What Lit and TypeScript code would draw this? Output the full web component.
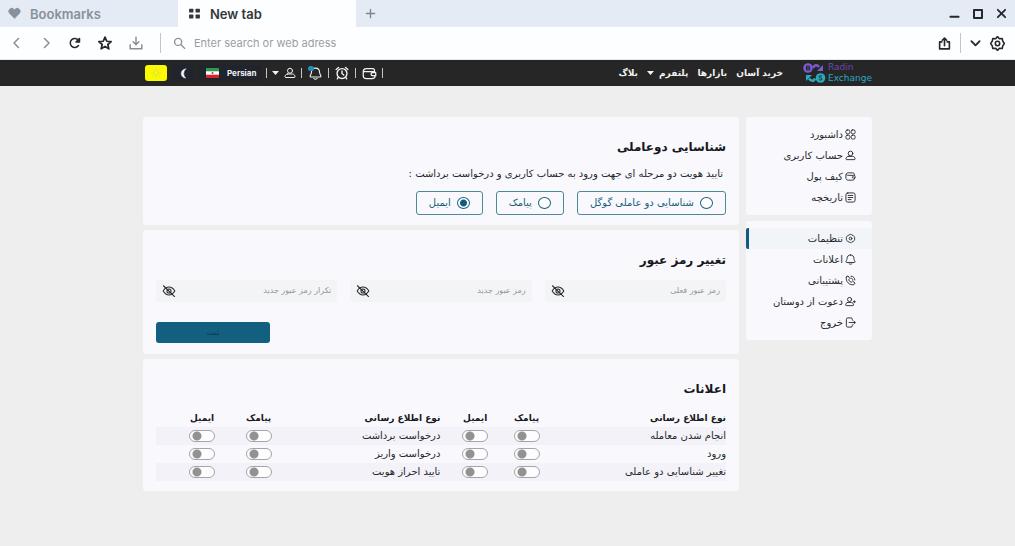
import { LitElement, html, css, svg, nothing } from "lit";
import { customElement, state } from "lit/decorators.js";
import { classMap } from "lit/directives/class-map.js";

const icon = (body: unknown, size = 12, stroke = 1.8, cls = "") => html`
  <svg class=${cls} width=${size} height=${size} viewBox="0 0 24 24" fill="none" stroke="currentColor"
    stroke-width=${stroke} stroke-linecap="round" stroke-linejoin="round" aria-hidden="true">${body}</svg>`;

const glyph = {
  heart: svg`<path fill="currentColor" d="M12 21 3 12a5.6 5.6 0 0 1 0-8 5.6 5.6 0 0 1 8 0l1 1 1-1a5.6 5.6 0 0 1 8 8z"/>`,
  tiles: svg`<g fill="currentColor" stroke="none"><rect x="2" y="3" width="8" height="7" rx="1"/><rect x="14" y="3" width="8" height="7" rx="1"/><rect x="2" y="14" width="8" height="7" rx="1"/><rect x="14" y="14" width="8" height="7" rx="1"/></g>`,
  plus: svg`<path d="M12 3v18M3 12h18"/>`,
  minimize: svg`<path d="M3 19h18"/>`,
  maximize: svg`<rect x="4" y="4" width="16" height="16"/>`,
  close: svg`<path d="m4 4 16 16M20 4 4 20"/>`,
  back: svg`<path d="m15 3-9 9 9 9"/>`,
  forward: svg`<path d="m9 3 9 9-9 9"/>`,
  reload: svg`<path d="M19 17a9 9 0 1 1 0-10"/><path fill="currentColor" d="M21 3v7h-7z"/>`,
  star: svg`<path d="m12 2 3 7 7.500.6-5.700 5 1.800 7.400L12 18l-6.600 4 1.800-7.400-5.700-5L9 9z"/>`,
  download: svg`<path d="M12 2v13m-5-5 5 5 5-5M2 15v7h20v-7"/>`,
  search: svg`<circle cx="9.500" cy="9" r="6.500"/><path d="m14.500 14 7 7"/>`,
  share: svg`<path d="M7 9H3v13h18V9h-4M12 16V3M8 6l4-4 4 4"/>`,
  down: svg`<path d="m3 7 9 9 9-9"/>`,
  cog: svg`<path d="m12 1 3 3.500 4.500-.5 1 4.500L23 12l-2.500 3.500-1 4.500-4.500-.5L12 23l-3-3.500-4.500.5-1-4.500L1 12l2.500-3.500 1-4.500 4.500.5z"/><circle cx="12" cy="12" r="3.500"/>`,
  bulb: svg`<circle cx="12" cy="12" r="5"/><path d="M12 2v2M12 20v2M2 12h2M20 12h2M5 5l1 1M18 18l1 1M5 19l1-1M18 6l1-1"/>`,
  moon: svg`<path fill="currentColor" d="M17 2a10 10 0 1 0 0 20 13 13 0 0 1 0-20z"/>`,
  user: svg`<circle cx="12" cy="7.500" r="5"/><path d="M7 14h10c3 0 5 3 5 5.500 0 1-.5 1.500-1.500 1.500h-17C2.500 21 2 20.500 2 19.500 2 17 4 14 7 14z"/>`,
  bell: svg`<path d="M12 2c-4.800 0-7.500 3.300-7.500 7.800 0 3.700-2.500 5.200-2.500 7.200 0 1 .7 1.500 1.500 1.500h17c.8 0 1.500-.5 1.500-1.500 0-2-2.500-3.500-2.500-7.200C19.500 5.300 16.800 2 12 2zM9 21.500c1.500 1 4.500 1 6 0"/>`,
  alarm: svg`<circle cx="12" cy="13" r="8.500"/><path d="M12 8.500V13l3 2.500M2 6l4-3.500M22 6l-4-3.500M5.500 19.500 4 22M18.500 19.500 20 22"/>`,
  wallet: svg`<path d="M20 9V7c0-2-1-3-3-3H7C4 4 2 6 2 9v6c0 3 2 5 5 5h9c3 0 5-2 5-4M2 9h16c2.500 0 4 1 4 3v3.500h-5a2.500 2.500 0 0 1 0-5h5"/>`,
  purse: svg`<path d="M21 15.500c0 3-2 4.500-5 4.500H7c-3 0-5-2-5-5V9c0-3 2-5 5-5h9c3 0 5 1.500 5 4.500M3 8c1 1.200 2 1.500 4 1.500h12c2 0 3 .8 3 2.500v3.500h-4a2 2 0 0 1 0-4"/>`,
  grid: svg`<rect x="2" y="2" width="8.500" height="8.500" rx="3"/><rect x="13.500" y="2" width="8.500" height="8.500" rx="3"/><rect x="2" y="13.500" width="8.500" height="8.500" rx="3"/><rect x="13.500" y="13.500" width="8.500" height="8.500" rx="3"/>`,
  history: svg`<rect x="2" y="2" width="20" height="20" rx="4"/><path d="M7 7.500h10M7 12h10M7 16.500h6"/>`,
  settings: svg`<path d="M10 3.500c1.300-.8 2.700-.8 4 0l5 3c1.300.8 2 1.800 2 3.300v4.400c0 1.500-.7 2.500-2 3.300l-5 3c-1.300.8-2.700.8-4 0l-5-3c-1.300-.8-2-1.800-2-3.300V9.800c0-1.500.7-2.500 2-3.300z"/><circle cx="12" cy="12" r="3"/>`,
  phone: svg`<path d="M3 4.500 6.500 2l4 5.500L8 10.500c1 2.500 3 4.500 5.500 5.500l3-2.500 5.500 4-2.500 3.500C10 23.500.5 14 3 4.500zM13 2.500c5 0 8.500 3.500 8.500 8.500M13 7c2.500 0 4 1.500 4 4"/>`,
  invite: svg`<circle cx="10" cy="7.500" r="4.500"/><path d="M6 14h8c3 0 4.500 3 4.500 5.500 0 1-.5 1.500-1.500 1.500H3c-1 0-1.500-.5-1.500-1.500C1.500 17 3 14 6 14zM20.500 10.500v4M18.500 12.500h4"/>`,
  exit: svg`<path d="M16 7V5c0-2-1-3-3-3H6C4 2 3 3 3 5v14c0 2 1 3 3 3h7c2 0 3-1 3-3v-2M9 12h13M19 8.500l3.500 3.500-3.500 3.500"/>`,
  eyeOff: svg`<path d="M2 12c5.500-9 14.500-9 20 0-5.500 9-14.500 9-20 0z"/><circle cx="12" cy="12" r="3.500"/><path d="M2.500 3 21.500 21.500"/>`,
};

const sideGroups = [
  [
    { label: "داشبورد", icon: glyph.grid },
    { label: "حساب کاربری", icon: glyph.user },
    { label: "کیف پول", icon: glyph.purse },
    { label: "تاریخچه", icon: glyph.history },
  ],
  [
    { label: "تنظیمات", icon: glyph.settings, active: true },
    { label: "اعلانات", icon: glyph.bell },
    { label: "پشتیبانی", icon: glyph.phone },
    { label: "دعوت از دوستان", icon: glyph.invite },
    { label: "خروج", icon: glyph.exit },
  ],
];

@customElement("browser-bar")
export class BrowserBar extends LitElement {
  static styles = css`
    :host { display: block; font-family: Inter, "Open Sans", sans-serif; color: #25282c; background: #fdfeff; border-bottom: 1px solid #e6e8ea; }
    * { box-sizing: border-box; }
    svg { display: block; flex: none; }
    button { border: 0; padding: 0; background: none; color: inherit; font: inherit; cursor: pointer; }
    .strip { display: flex; height: 27px; background: #e4ebf4; }
    .strip .tab { display: flex; align-items: center; gap: 9px; width: 178px; padding: 0 8px; font-size: 13px; font-weight: 600; line-height: 24px; color: #88919a; }
    .strip .current { background: #fdfeff; color: #33363a; padding: 0 10px; }
    .add { padding: 0 9px; color: #7d858e; }
    .window { display: flex; align-items: center; gap: 12px; margin-left: auto; padding-right: 8px; }
    .tools { display: flex; align-items: center; height: 32px; padding: 0 10px 0 11px; }
    .nav { display: flex; align-items: center; gap: 17px; }
    .soft { color: #8b8f93; }
    .bar { width: 1px; height: 20px; background: #c2c5c8; }
    .search { display: flex; flex: 1; align-items: center; gap: 8px; margin-left: 12px; color: #8b8f93; }
    .search input { flex: 1; min-width: 0; padding: 0; border: 0; outline: 0; background: none; font: 11px Inter, sans-serif; color: #333; }
    .search input::placeholder { color: #9b9ea2; opacity: 1; }
    .end { display: flex; align-items: center; gap: 9px; }
  `;

  render() {
    return html`
      <div class="strip">
        <button class="tab">${icon(glyph.heart, 13, 1)}<span>Bookmarks</span></button>
        <button class="tab current">${icon(glyph.tiles, 13, 1)}<span>New tab</span></button>
        <button class="add" aria-label="New tab">${icon(glyph.plus, 11, 3)}</button>
        <div class="window">
          <button aria-label="Minimize">${icon(glyph.minimize, 11, 4)}</button>
          <button aria-label="Maximize">${icon(glyph.maximize, 12, 4)}</button>
          <button aria-label="Close">${icon(glyph.close, 11, 4)}</button>
        </div>
      </div>
      <div class="tools">
        <div class="nav">
          <button class="soft" aria-label="Back">${icon(glyph.back, 12, 3)}</button>
          <button class="soft" aria-label="Forward">${icon(glyph.forward, 12, 3)}</button>
          <button aria-label="Reload">${icon(glyph.reload, 12, 3)}</button>
          <button aria-label="Favourite">${icon(glyph.star, 14, 3)}</button>
          <button class="soft" aria-label="Download">${icon(glyph.download, 14, 2.5)}</button>
          <span class="bar"></span>
        </div>
        <label class="search">${icon(glyph.search, 13, 2.5)}
          <input type="text" aria-label="Address" placeholder="Enter search or web adress" />
        </label>
        <div class="end">
          <button aria-label="Share">${icon(glyph.share, 13, 3)}</button>
          <span class="bar"></span>
          <button aria-label="More">${icon(glyph.down, 11, 4)}</button>
          <button aria-label="Settings">${icon(glyph.cog, 15, 2.5)}</button>
        </div>
      </div>`;
  }
}

@customElement("site-header")
export class SiteHeader extends LitElement {
  static styles = css`
    :host { display: block; background: #262626; color: #f2f2f2; }
    * { box-sizing: border-box; }
    svg { display: block; flex: none; }
    button { display: flex; align-items: center; justify-content: center; border: 0; padding: 0; background: none; color: inherit; font: inherit; cursor: pointer; }
    a { color: inherit; text-decoration: none; }
    .inner { display: flex; align-items: center; justify-content: space-between; width: calc(100% - 32px); max-width: 729px; height: 26px; margin: 0 auto; }
    .start { display: flex; align-items: center; gap: 20px; }
    .logo { display: flex; align-items: center; gap: 2px; direction: ltr; color: #29a9c4; font: 9px/11px "DejaVu Sans", sans-serif; }
    .word { display: flex; flex-direction: column; }
    .top { color: #6b46b4; }
    .links { display: flex; gap: 9px; font: bold 9px/16px "DejaVu Sans", sans-serif; }
    .links a { display: flex; align-items: center; gap: 5px; }
    .tools { display: flex; align-items: center; direction: ltr; gap: 5px; padding-left: 2px; }
    .tile { width: 22px; height: 16px; border-radius: 3px; background: #1f242d; }
    .tile.sun { background: #fbfb00; color: #dede50; }
    .lang { gap: 8px; height: 16px; padding: 0 5px 0 7px; border-radius: 3px; background: #1f242d; font: bold 8px/16px Inter, sans-serif; }
    .account { display: flex; align-items: center; gap: 5px; }
    .account i { width: 1px; height: 10px; background: #c4c4c4; }
    .account button { width: 14px; height: 16px; margin: 0 1px; }
    .account .user { width: auto; gap: 5px; margin: 0; }
    .bell { position: relative; }
    .badge { position: absolute; top: 1px; left: 0; width: 6px; height: 5px; border-radius: 3px; background: #2b8fb5; }
  `;

  render() {
    const caret = html`<svg width="7" height="4" viewBox="0 0 7 4" aria-hidden="true"><path fill="currentColor" d="M0 0h7L3.500 4z"/></svg>`;
    return html`
      <div class="inner">
        <div class="start">
          <a class="logo" href="#home">
            <svg width="23" height="20" viewBox="0 0 23 20" aria-hidden="true">
              <circle cx="5" cy="5" r="4.800" fill="#7a5bd0"/>
              <path d="M3.500 3h2.300a1 1 0 0 1 0 2H3.500h2.600a1 1 0 0 1 0 2H3.500z" fill="none" stroke="#262626"/>
              <path d="M10 5c1-3 4-4 6-1" fill="none" stroke="#7a5bd0" stroke-width="2.500"/><path d="M20 2v6h-6z" fill="#7a5bd0"/>
              <circle cx="17.500" cy="15" r="4.800" fill="#2aa9bf"/>
              <path d="M19 13.300c-1-.9-3-.6-3 .5 0 1.300 3 .9 3 2.200 0 1.200-2 1.400-3.200.5" fill="none" stroke="#262626"/>
              <path d="M12 15.500c-1 3-4 3-6 0" fill="none" stroke="#2aa9bf" stroke-width="2.500"/><path d="M3 18v-6h6z" fill="#2aa9bf"/>
            </svg>
            <span class="word"><span class="top">Radin</span><span>Exchange</span></span>
          </a>
          <nav class="links">
            <a href="#buy">خرید آسان</a>
            <a href="#markets">بازارها</a>
            <a href="#platform">پلتفرم ${caret}</a>
            <a href="#blog">بلاگ</a>
          </nav>
        </div>
        <div class="tools">
          <button class="tile sun" aria-label="Light">${icon(glyph.bulb, 12, 2)}</button>
          <button class="tile" aria-label="Dark">${icon(glyph.moon, 11, 1)}</button>
          <button class="lang">
            <svg width="13" height="10" viewBox="0 0 13 10" aria-hidden="true">
              <path fill="#fff" d="M0 0h13v10H0z"/><path fill="#2c9a50" d="M0 0h13v3.300H0z"/><path fill="#d8252c" d="M0 6.700h13V10H0z"/><circle cx="6.500" cy="5" r="1" fill="#d8252c"/>
            </svg>
            <span>Persian</span>
          </button>
          <div class="account">
            <i></i>
            <button class="user" aria-label="Account">${caret}${icon(glyph.user, 12, 2)}</button>
            <i></i>
            <button class="bell" aria-label="Notifications">${icon(glyph.bell, 13, 2)}<span class="badge"></span></button>
            <i></i>
            <button aria-label="Alarm">${icon(glyph.alarm, 14, 2.4)}</button>
            <i></i>
            <button aria-label="Wallet">${icon(glyph.wallet, 15, 2)}</button>
            <i></i>
          </div>
        </div>
      </div>`;
  }
}

@customElement("side-menu")
export class SideMenu extends LitElement {
  static styles = css`
    :host { display: flex; flex-direction: column; gap: 6px; font: 10px/20px "DejaVu Sans", sans-serif; color: #26282b; }
    .group { padding: 7px 0; border-radius: 3px; background: #f8f8fd; }
    .item { display: flex; align-items: center; gap: 2px; height: 21px; padding: 0 16px; border-left: 3px solid transparent; color: inherit; text-decoration: none; }
    .item.active { border-left-color: #0f5c7d; border-radius: 2px; background: #f1f5f9; }
    svg { flex: none; }
  `;

  render() {
    return sideGroups.map((group) => html`
      <nav class="group">
        ${group.map((item: any) => html`
          <a class=${classMap({ item: true, active: !!item.active })} href="#"
            aria-current=${item.active ? "page" : nothing}>${icon(item.icon, 11, 2)}<span>${item.label}</span></a>`)}
      </nav>`);
  }
}

const rows = [
  ["انجام شدن معامله", "درخواست برداشت"],
  ["ورود", "درخواست واریز"],
  ["تغییر شناسایی دو عاملی", "تایید احراز هویت"],
];

@customElement("app-root")
export class AppRoot extends LitElement {
  static styles = css`
    :host { display: block; min-height: 100vh; background: #eee; font: 10px/18px "DejaVu Sans", sans-serif; color: #26282b; }
    * { box-sizing: border-box; }
    .page { display: grid; grid-template-columns: 126px minmax(0, 1fr); align-items: start; gap: 7px; width: calc(100% - 32px); max-width: 729px; margin: 0 auto; padding: 31px 0; }
    .main { display: flex; flex-direction: column; gap: 5px; }
    .card { padding: 18px 13px 10px; border-radius: 3px; background: #f8f8fd; }
    h2 { margin: 0; font-size: 12px; line-height: 24px; font-weight: bold; color: #17191c; }
    .lead { margin: 6px 3px 8px; }
    .options { display: flex; flex-wrap: wrap; gap: 13px; }
    .option { display: flex; align-items: center; gap: 6px; height: 24px; padding: 0 12px; border: 1px solid #4d8a98; border-radius: 3px; color: #175f7c; }
    .option input { appearance: none; width: 13px; height: 12px; margin: 0; border: 1px solid #175f7c; border-radius: 50%; background: #fff; }
    .option input:checked { background: radial-gradient(circle, #0f5c7d 3px, #fff 4px); }
    .fields { display: grid; grid-template-columns: repeat(3, 1fr); gap: 13px; margin-top: 8px; }
    .field { display: flex; align-items: center; height: 22px; padding: 0 6px; border-radius: 3px; background: #f2f4f6; }
    .field input { flex: 1; min-width: 0; padding: 0; border: 0; outline: 0; background: none; font: 8px/18px "DejaVu Sans", sans-serif; color: #26282b; }
    .field input::placeholder { color: #94979b; opacity: 1; }
    .field button { display: flex; padding: 0; border: 0; background: none; color: #26282b; cursor: pointer; }
    .password { padding-bottom: 11px; }
    .submit { display: block; width: 114px; height: 21px; margin: 20px auto 0 0; padding: 0; border: 0; border-radius: 3px; background: #125f80; color: #0b3d55; font: 8px/18px "DejaVu Sans", sans-serif; cursor: pointer; }
    table { width: 100%; margin-top: 8px; table-layout: fixed; border-collapse: collapse; }
    th, td { height: 18px; padding: 0; line-height: 16px; font-weight: normal; text-align: center; white-space: nowrap; }
    thead th { font-size: 9px; font-weight: bold; color: #17191c; }
    th.name, td.name { text-align: right; }
    .second { padding-right: 12px; }
    .last { padding-left: 18px; }
    tbody tr:nth-child(odd) { background: #f2f2f8; }
    .w30 { width: 30%; } .w29 { width: 29%; } .w10 { width: 10%; } .w8 { width: 8%; } .w13 { width: 13%; }
    .switch { appearance: none; display: block; width: 26px; height: 12px; margin: 0 auto; border: 1px solid #a5a5a8; border-radius: 6px; background: radial-gradient(circle at 7px 5px, #929292 4px, #fdfdff 5px); cursor: pointer; }
    .switch:checked { background: radial-gradient(circle at 17px 5px, #0f5c7d 4px, #fdfdff 5px); }
  `;

  @state() private method = "email";

  private option(value: string, label: string) {
    return html`<label class="option"><input type="radio" name="method" .checked=${this.method === value}
      @change=${() => (this.method = value)} /><span>${label}</span></label>`;
  }

  private field(label: string) {
    return html`<div class="field"><input type="password" aria-label=${label} placeholder=${label} />
      <button aria-label="نمایش رمز">${icon(glyph.eyeOff, 14, 1.8)}</button></div>`;
  }

  private toggle(label: string) {
    return html`<input class="switch" type="checkbox" role="switch" aria-label=${label} />`;
  }

  render() {
    return html`
      <browser-bar></browser-bar>
      <site-header dir="rtl"></site-header>
      <div class="page" dir="rtl" lang="fa">
        <side-menu></side-menu>
        <main class="main">
          <section class="card">
            <h2>شناسایی دوعاملی</h2>
            <p class="lead">تایید هویت دو مرحله ای جهت ورود به حساب کاربری و درخواست برداشت :</p>
            <div class="options">
              ${this.option("google", "شناسایی دو عاملی گوگل")}
              ${this.option("sms", "پیامک")}
              ${this.option("email", "ایمیل")}
            </div>
          </section>
          <section class="card password">
            <h2>تغییر رمز عبور</h2>
            <div class="fields">
              ${this.field("رمز عبور فعلی")}
              ${this.field("رمز عبور جدید")}
              ${this.field("تکرار رمز عبور جدید")}
            </div>
            <button class="submit">ثبت</button>
          </section>
          <section class="card">
            <h2>اعلانات</h2>
            <table>
              <colgroup><col class="w30" /><col class="w10" /><col class="w8" /><col class="w29" /><col class="w10" /><col class="w13" /></colgroup>
              <thead>
                <tr>
                  <th class="name">نوع اطلاع رسانی</th><th>پیامک</th><th>ایمیل</th>
                  <th class="name second">نوع اطلاع رسانی</th><th>پیامک</th><th class="last">ایمیل</th>
                </tr>
              </thead>
              <tbody>
                ${rows.map(([a, b]) => html`
                  <tr>
                    <td class="name">${a}</td><td>${this.toggle(a + " پیامک")}</td><td>${this.toggle(a + " ایمیل")}</td>
                    <td class="name second">${b}</td><td>${this.toggle(b + " پیامک")}</td><td class="last">${this.toggle(b + " ایمیل")}</td>
                  </tr>`)}
              </tbody>
            </table>
          </section>
        </main>
      </div>`;
  }
}
